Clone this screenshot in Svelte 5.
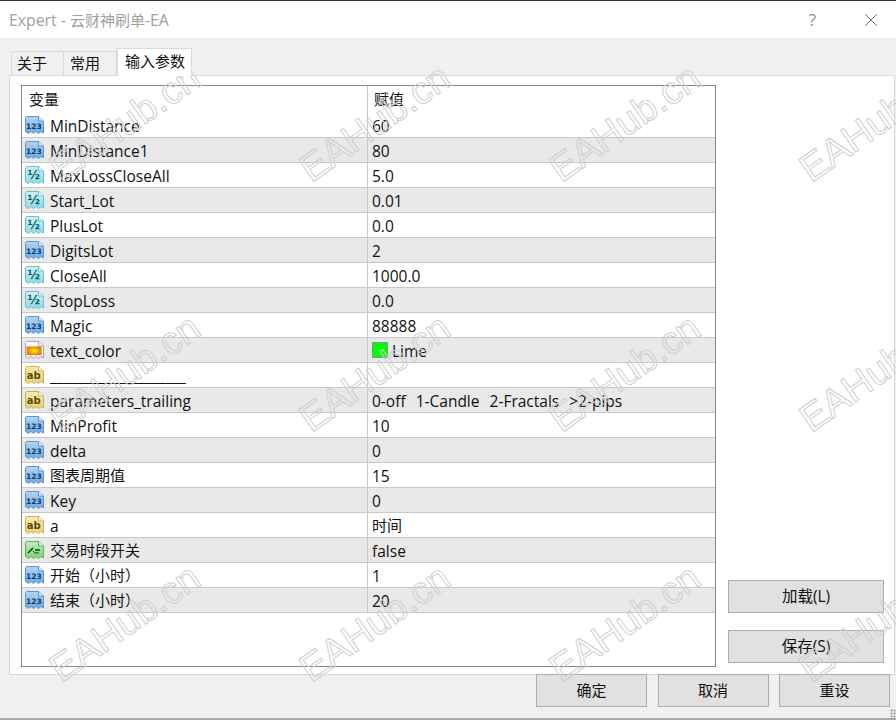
<script lang="ts">
  const rows = [
    { name: "MinDistance", value: "60", type: "int" },
    { name: "MinDistance1", value: "80", type: "int" },
    { name: "MaxLossCloseAll", value: "5.0", type: "dbl" },
    { name: "Start_Lot", value: "0.01", type: "dbl" },
    { name: "PlusLot", value: "0.0", type: "dbl" },
    { name: "DigitsLot", value: "2", type: "int" },
    { name: "CloseAll", value: "1000.0", type: "dbl" },
    { name: "StopLoss", value: "0.0", type: "dbl" },
    { name: "Magic", value: "88888", type: "int" },
    { name: "text_color", value: "Lime", type: "color" },
    { name: "____________________", value: "", type: "str" },
    { name: "parameters_trailing", value: "0-off  1-Candle  2-Fractals  >2-pips", type: "str" },
    { name: "MinProfit", value: "10", type: "int" },
    { name: "delta", value: "0", type: "int" },
    { name: "图表周期值", value: "15", type: "int" },
    { name: "Key", value: "0", type: "int" },
    { name: "a", value: "时间", type: "str" },
    { name: "交易时段开关", value: "false", type: "bool" },
    { name: "开始（小时）", value: "1", type: "int" },
    { name: "结束（小时）", value: "20", type: "int" }
  ];

  const palette = {
    int: ["#b4d6f4", "#6aa8e2", "#5a96d0", "#123a6a"],
    dbl: ["#d0f2f5", "#8edbe4", "#6cc0ce", "#0f5a6a"],
    str: ["#f8ecae", "#e8d270", "#ccb254", "#5a4a10"],
    bool: ["#bcefb8", "#7ad476", "#5cb45c", "#0c4a14"],
    color: ["#ffffff", "#f2f2f2", "#a8a8a8", "#333333"]
  };
  const labels = { int: "123", dbl: "½", str: "ab" };
  const marks = Array.from({ length: 12 });
  const isCjk = (s) => /[^\x00-\x7f]/.test(s);
</script>

{#snippet icon(type)}
  <svg class="icon" width="21" height="20" viewBox="0 0 21 20">
    <defs>
      <linearGradient id="g-{type}" x1="0" y1="0" x2="0" y2="1">
        <stop offset="0" stop-color={palette[type][0]} />
        <stop offset="1" stop-color={palette[type][1]} />
      </linearGradient>
      <radialGradient id="flame">
        <stop offset="0.2" stop-color="#ffe400" />
        <stop offset="1" stop-color="#ee7416" />
      </radialGradient>
    </defs>
    <path
      d="M2.5 1.5H14.5L19.5 6V18L17 16.5L14.5 18.5L12 16.5L9.5 18.5L7 16.5L4.5 18.5L1.5 16.5V2.5Z"
      fill="url(#g-{type})"
      stroke={palette[type][2]}
    />
    <path d="M14.5 1.5V6H19.5" fill="#fff" fill-opacity="0.7" stroke={palette[type][2]} />
    {#if type === "color"}
      <rect x="2.5" y="6.5" width="15" height="8.5" fill="url(#flame)" />
    {:else if type === "bool"}
      <path d="M4 13L9 8M11 10H16" stroke={palette[type][3]} stroke-width="1.6" fill="none" />
      <path d="M9 11L11 13H15" stroke={palette[type][3]} stroke-width="1" fill="none" />
    {:else}
      <text x="9.8" y="13.5" text-anchor="middle" fill={palette[type][3]} class="icon-label {type}">{labels[type]}</text>
    {/if}
  </svg>
{/snippet}

<div class="window">
  <header class="titlebar">
    <span class="title"><span class="latin">Expert -&nbsp;</span>云财神刷单<span class="latin">-EA</span></span>
    <span class="help">?</span>
    <svg class="close" width="12" height="12" viewBox="0 0 12 12">
      <path d="M0 0L12 12M12 0L0 12" stroke="#777" stroke-width="1" fill="none" />
    </svg>
  </header>

  <div class="body">
    <div class="tabs">
      <div class="tab">关于</div>
      <div class="tab">常用</div>
      <div class="tab active">输入参数</div>
    </div>

    <div class="panel">
      <div class="table">
        <div class="row head">
          <div class="cell name"><span class="cjk">变量</span></div>
          <div class="cell value"><span class="cjk">赋值</span></div>
        </div>
        {#each rows as row, i}
          <div class="row" class:alt={i % 2 === 1}>
            <div class="cell name">
              {@render icon(row.type)}
              <span class:cjk={isCjk(row.name)}>{row.name}</span>
            </div>
            <div class="cell value">
              {#if row.type === "color"}<i class="swatch"></i>{/if}
              <span class:cjk={isCjk(row.value)}>{row.value}</span>
            </div>
          </div>
        {/each}
      </div>

      <div class="side">
        <button>加载(L)</button>
        <button>保存(S)</button>
      </div>
    </div>

    <footer class="actions">
      <button>确定</button>
      <button>取消</button>
      <button>重设</button>
    </footer>
  </div>

  <div class="grip"></div>

  <div class="watermarks">
    {#each marks as _}
      <div class="mark"><span>EAHub.cn</span></div>
    {/each}
  </div>
</div>

<style>
  :global(body) {
    margin: 0;
    background: #f0f0f0;
  }

  .window {
    position: relative;
    width: 896px;
    height: 720px;
    box-sizing: border-box;
    display: flex;
    flex-direction: column;
    overflow: hidden;
    background: #f0f0f0;
    border-top: 1px solid #333;
    border-bottom: 2px solid #a8a8a8;
    font-family: "Open Sans", "Noto Sans CJK SC", sans-serif;
    font-size: 15.5px;
    color: #111;
  }

  .cell span {
    padding-top: 1px;
  }

  .cell span.cjk {
    font-size: 15px;
    padding-top: 0;
    padding-bottom: 2px;
  }

  .titlebar {
    height: 37px;
    flex: none;
    display: flex;
    align-items: center;
    background: #fff;
    padding: 0 19px 0 9px;
  }

  .title {
    flex: 1;
    color: #a0a0a0;
    font-size: 15px;
  }

  .latin {
    font-size: 15.8px;
  }

  .help {
    color: #8a8a8a;
    font-size: 17px;
    margin-right: 49px;
  }

  .body {
    flex: 1;
    display: flex;
    flex-direction: column;
    padding-top: 10px;
  }

  .tabs {
    display: flex;
    align-items: flex-end;
    height: 27px;
    padding-left: 11px;
    position: relative;
    z-index: 1;
    font-size: 15px;
  }

  .tab {
    width: 53px;
    height: 24px;
    box-sizing: border-box;
    border: 1px solid #d9d9d9;
    border-bottom: 0;
    border-left-width: 0;
    padding-left: 6px;
    line-height: 22px;
  }

  .tab:first-child {
    border-left-width: 1px;
    padding-left: 5px;
  }

  .tab.active {
    width: 75px;
    height: 28px;
    background: #fff;
    border-left-width: 1px;
    margin-bottom: -1px;
    padding-left: 7px;
    line-height: 24px;
  }

  .panel {
    margin-left: 9px;
    width: 886px;
    height: 600px;
    box-sizing: border-box;
    flex: none;
    background: #fff;
    border: 1px solid #d9d9d9;
    padding: 9px 11px 7px 11px;
    display: flex;
  }

  .table {
    width: 695px;
    box-sizing: border-box;
    border: 1px solid #86868e;
    flex: none;
  }

  .row {
    display: grid;
    grid-template-columns: 346px 1fr;
    height: 25px;
    box-sizing: border-box;
    border-bottom: 1px solid #c8c8c8;
  }

  .row.head {
    height: 27px;
    border-bottom: 0;
  }

  .row.alt {
    background: #e9e9e9;
  }

  .cell {
    display: flex;
    align-items: center;
    white-space: pre;
    min-width: 0;
  }

  .cell.name {
    padding-left: 2px;
    gap: 5px;
    border-right: 1px solid #c8c8c8;
  }

  .head .cell.name {
    padding-left: 7px;
  }

  .cell.value {
    padding-left: 4px;
    word-spacing: 1px;
  }

  .head .cell.value {
    padding-left: 6px;
  }

  .icon {
    flex: none;
  }

  .icon-label {
    font-family: "DejaVu Sans", sans-serif;
    font-size: 10px;
    font-weight: 700;
  }

  .icon-label.int {
    font-size: 7.5px;
  }

  .icon-label.dbl {
    font-size: 12px;
  }

  .swatch {
    width: 14px;
    height: 14px;
    margin-right: 4px;
    background: #00ff00;
    border: 1px solid #909090;
  }

  .side {
    flex: 1;
    display: flex;
    flex-direction: column;
    justify-content: flex-end;
    gap: 17px;
    padding: 0 0 4px 12px;
  }

  button {
    font: inherit;
    color: inherit;
    width: 156px;
    height: 33px;
    padding: 0 0 2px;
    background: #e1e1e1;
    border: 1px solid #adadad;
  }

  .actions {
    display: flex;
    justify-content: flex-end;
    gap: 10.5px;
    padding-right: 6px;
    margin-top: -1px;
    font-size: 15px;
  }

  .actions button {
    width: 111px;
  }

  .grip {
    position: absolute;
    right: 0;
    bottom: 0;
    width: 6px;
    height: 9px;
    background: radial-gradient(circle, #b4b4b4 1.2px, transparent 1.3px) 0 0 / 3px 3px;
  }

  .watermarks {
    position: absolute;
    top: -3px;
    left: 0;
    display: grid;
    grid-template-columns: repeat(4, 250px);
    grid-auto-rows: 250px;
    pointer-events: none;
  }

  .mark {
    display: flex;
    align-items: center;
    justify-content: center;
  }

  .mark span {
    transform: rotate(-35deg);
    white-space: nowrap;
    font-family: "Liberation Sans", sans-serif;
    font-size: 38.5px;
    color: transparent;
    -webkit-text-stroke: 1px #cfcfcf;
  }
</style>
